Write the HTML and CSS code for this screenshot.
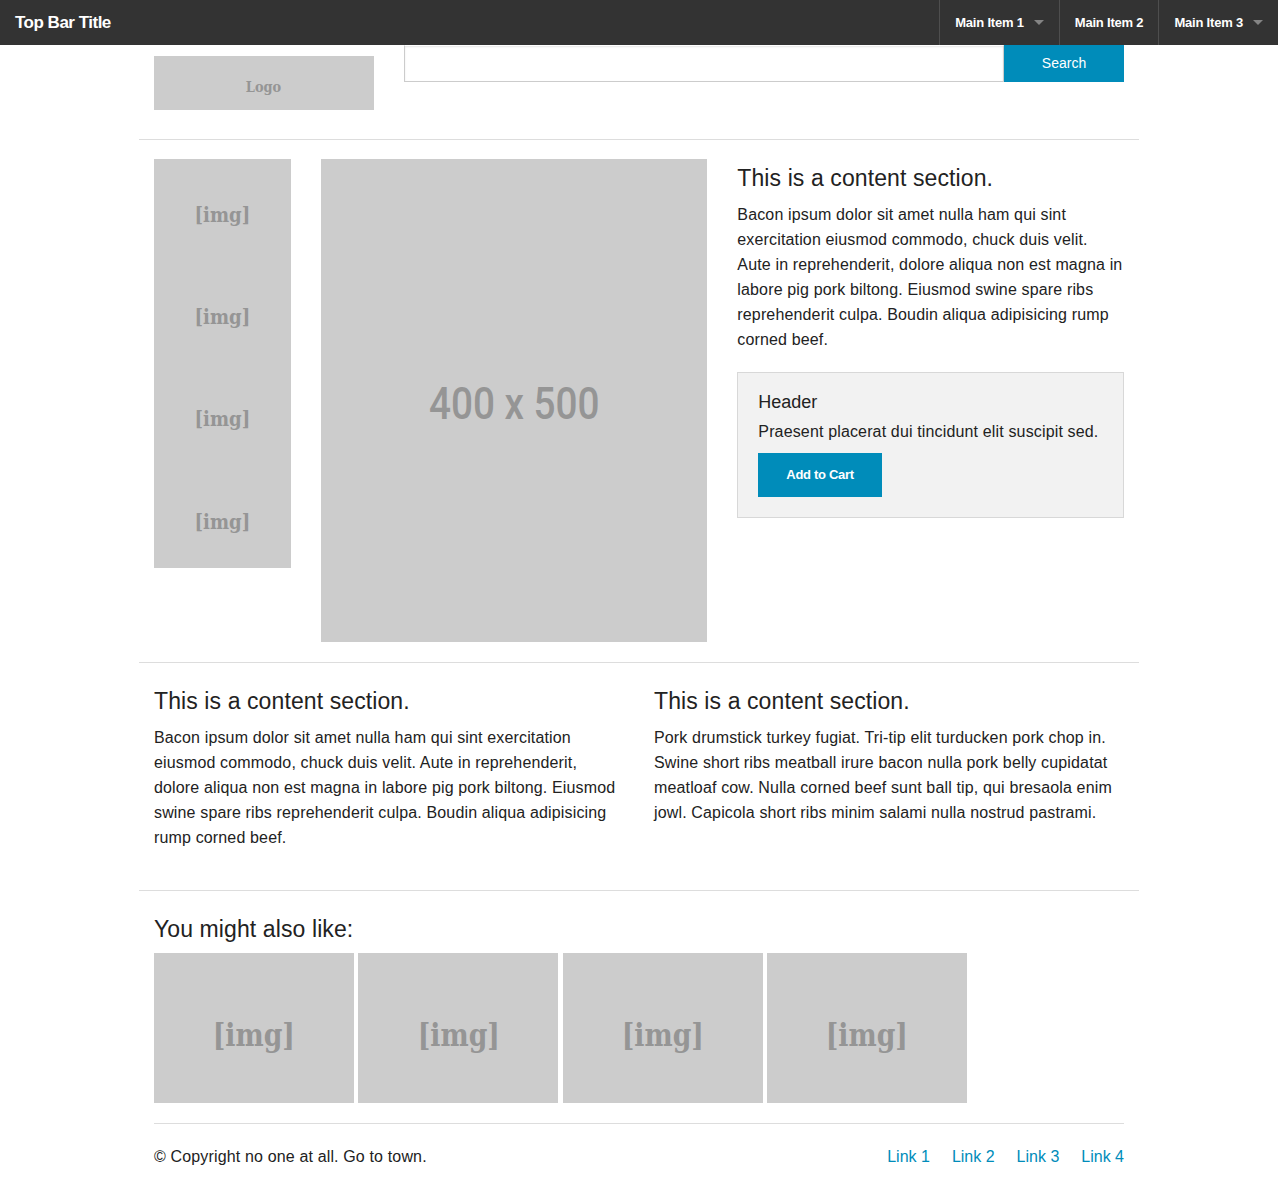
FILE: index.html
```html
<!DOCTYPE html>
<html lang="en">
<head>
<meta charset="utf-8">
<title>Store</title>
<link rel="stylesheet" href="styles.css">
</head>
<body>
<nav class="topbar">
  <div class="title">Top Bar Title</div>
  <ul class="menu">
    <li class="item has-dropdown">Main Item 1</li>
    <li class="item">Main Item 2</li>
    <li class="item has-dropdown">Main Item 3</li>
  </ul>
</nav>

<header class="row header-row">
  <div class="col col-3">
    <div class="logo"><span class="ph-text">Logo</span></div>
  </div>
  <div class="col col-9">
    <div class="search">
      <input class="search-input" type="text">
      <span class="search-btn">Search</span>
    </div>
  </div>
</header>

<hr class="rule">

<section class="row">
  <div class="col col-2">
    <div class="thumb ph"><span class="ph-text">[img]</span></div>
    <div class="thumb ph"><span class="ph-text">[img]</span></div>
    <div class="thumb ph"><span class="ph-text">[img]</span></div>
    <div class="thumb ph"><span class="ph-text">[img]</span></div>
  </div>
  <div class="col col-5">
    <div class="big ph"><span class="big-text">400 x 500</span></div>
  </div>
  <div class="col col-5">
    <h4>This is a content section.</h4>
    <p>Bacon ipsum dolor sit amet nulla ham qui sint exercitation eiusmod commodo, chuck duis velit. Aute in reprehenderit, dolore aliqua non est magna in labore pig pork biltong. Eiusmod swine spare ribs reprehenderit culpa. Boudin aliqua adipisicing rump corned beef.</p>
    <div class="panel">
      <h5>Header</h5>
      <p>Praesent placerat dui tincidunt elit suscipit sed.</p>
      <span class="button">Add to Cart</span>
    </div>
  </div>
</section>

<hr class="rule">

<section class="row">
  <div class="col col-6">
    <h4>This is a content section.</h4>
    <p>Bacon ipsum dolor sit amet nulla ham qui sint exercitation eiusmod commodo, chuck duis velit. Aute in reprehenderit, dolore aliqua non est magna in labore pig pork biltong. Eiusmod swine spare ribs reprehenderit culpa. Boudin aliqua adipisicing rump corned beef.</p>
  </div>
  <div class="col col-6">
    <h4>This is a content section.</h4>
    <p>Pork drumstick turkey fugiat. Tri-tip elit turducken pork chop in. Swine short ribs meatball irure bacon nulla pork belly cupidatat meatloaf cow. Nulla corned beef sunt ball tip, qui bresaola enim jowl. Capicola short ribs minim salami nulla nostrud pastrami.</p>
  </div>
</section>

<hr class="rule">

<section class="row">
  <div class="col col-12">
    <h4>You might also like:</h4>
    <div class="related">
      <div class="rel ph"><span class="ph-text">[img]</span></div>
      <div class="rel ph"><span class="ph-text">[img]</span></div>
      <div class="rel ph"><span class="ph-text">[img]</span></div>
      <div class="rel ph"><span class="ph-text">[img]</span></div>
    </div>
  </div>
</section>

<footer class="row">
  <div class="col col-12">
    <hr class="foot-rule">
    <div class="footer-line">
      <p class="copy">© Copyright no one at all. Go to town.</p>
      <ul class="links">
        <li><a href="#">Link 1</a></li>
        <li><a href="#">Link 2</a></li>
        <li><a href="#">Link 3</a></li>
        <li><a href="#">Link 4</a></li>
      </ul>
    </div>
  </div>
</footer>
</body>
</html>
```

FILE: styles.css
```css
* { box-sizing: border-box; }
html, body { margin: 0; padding: 0; }
body {
  font-family: "Liberation Sans", Arial, sans-serif;
  color: #222;
  background: #fff;
  font-size: 16px;
}

.topbar {
  height: 45px;
  background: #333;
  display: flex;
  justify-content: space-between;
  align-items: stretch;
}
.title {
  color: #fff;
  font-weight: bold;
  font-size: 17px;
  letter-spacing: -0.5px;
  line-height: 45px;
  padding-left: 15px;
}
.menu {
  list-style: none;
  margin: 0;
  padding: 0;
  display: flex;
}
.item {
  position: relative;
  color: #fff;
  font-weight: bold;
  font-size: 13px;
  letter-spacing: -0.2px;
  line-height: 45px;
  padding: 0 15px;
  border-left: 1px solid #4e4e4e;
}
.has-dropdown { padding-right: 35px; }
.has-dropdown::after {
  content: "";
  position: absolute;
  right: 15px;
  top: 20px;
  border: 5px solid transparent;
  border-top-color: rgba(255,255,255,0.4);
  border-bottom-width: 0;
}

.row {
  width: 1000px;
  margin: 0 auto;
  display: flex;
}
.col { padding: 0 15px; }
.col-2 { width: 16.6667%; }
.col-3 { width: 25%; }
.col-5 { width: 41.6667%; }
.col-6 { width: 50%; }
.col-9 { width: 75%; }
.col-12 { width: 100%; }

.header-row { padding-bottom: 9px; }
.logo {
  margin-top: 11px;
  height: 54px;
  background: #ccc;
  color: #959595;
  font-family: "DejaVu Serif", serif;
  font-weight: bold;
  font-size: 15px;
  display: flex;
  align-items: center;
  justify-content: center;
  padding-top: 8px;
}
.search { display: flex; }
.search-input {
  width: 600px;
  height: 37px;
  margin: 0;
  border: 1px solid #ccc;
  border-top-color: #fff;
  box-shadow: inset 0 1px 2px rgba(0,0,0,0.1);
  background: #fff;
}
.search-btn {
  width: 120px;
  height: 37px;
  background: #008cba;
  color: #fff;
  font-size: 14px;
  display: flex;
  align-items: center;
  justify-content: center;
  padding-bottom: 2px;
}

.rule {
  width: 1000px;
  margin: 20px auto 19px;
  border: 0;
  border-top: 1px solid #ddd;
  height: 0;
}

.ph {
  background: #ccc;
  color: #959595;
  display: flex;
  align-items: center;
  justify-content: center;
}
.ph-text {
  display: inline-block;
  transform: scaleX(0.86);
}
.thumb {
  height: 102.2px;
  font-family: "DejaVu Serif", serif;
  font-weight: bold;
  font-size: 21px;
  padding-top: 9px;
}
.big {
  height: 482.5px;
  font-family: Roboto, "DejaVu Sans", sans-serif;
  font-weight: 500;
  font-size: 45px;
  padding-top: 6px;
}
.big-text {
  display: inline-block;
  transform: scaleX(0.86);
}

h4 {
  font-size: 23px;
  font-weight: normal;
  line-height: 32px;
  letter-spacing: 0.1px;
  margin: 3px 0 8px;
}
p {
  line-height: 25px;
  letter-spacing: 0.15px;
  margin: 0 0 20px;
}

.panel {
  background: #f2f2f2;
  border: 1px solid #d8d8d8;
  padding: 20px;
}
.panel h5 {
  font-size: 18px;
  font-weight: normal;
  line-height: 18px;
  margin: 0 0 8px;
}
.panel p { margin-bottom: 8.5px; }
.button {
  display: inline-block;
  background: #008cba;
  color: #fff;
  font-weight: bold;
  font-size: 13px;
  letter-spacing: -0.3px;
  line-height: 15px;
  padding: 14px 28px 15px;
}

.related {
  display: flex;
  gap: 4.4px;
  margin-top: 1px;
}
.rel {
  width: 200px;
  height: 150px;
  font-family: "DejaVu Serif", serif;
  font-weight: bold;
  font-size: 31px;
  padding-top: 14px;
}

.foot-rule {
  margin: 20px 0 20px;
  border: 0;
  border-top: 1px solid #ddd;
  height: 0;
}
.footer-line {
  display: flex;
  justify-content: space-between;
}
.copy { margin: 0; }
.links {
  list-style: none;
  margin: 0;
  padding: 0;
  display: flex;
  gap: 22px;
  line-height: 25px;
}
.links a {
  color: #008cba;
  text-decoration: none;
}
```
